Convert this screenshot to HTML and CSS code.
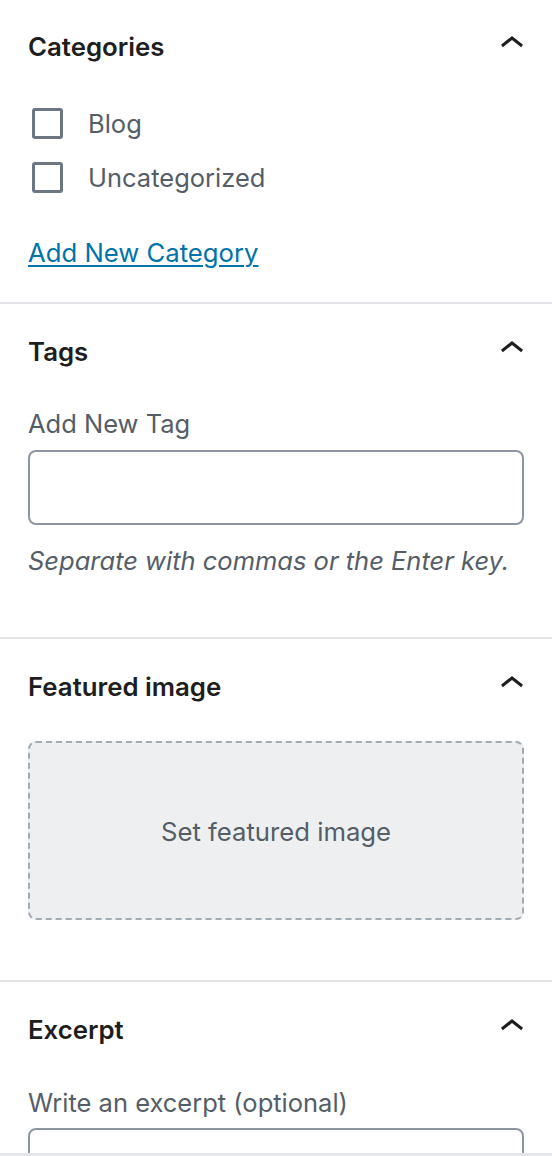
FILE: index.html
```html
<!DOCTYPE html>
<html lang="en">
<head>
    <meta charset="UTF-8">
    <meta name="viewport" content="width=device-width, initial-scale=1.0">
    <title>Post settings</title>
    <link rel="stylesheet" href="styles.css">
</head>
<body>
<div class="sidebar">
    <div class="panel first">
        <div class="panel-head">
            <h2>Categories</h2>
            <svg class="chevron" viewBox="0 0 24 24" width="48" height="48"><path d="M6.5 12.4L12 8l5.5 4.4-.9 1.2L12 10l-4.6 3.6-.9-1.2z"/></svg>
        </div>
        <div class="panel-body cats">
            <div class="checklist">
                <label class="check"><span class="box"></span>Blog</label>
                <label class="check"><span class="box"></span>Uncategorized</label>
            </div>
            <a href="#" class="add-link">Add New Category</a>
        </div>
    </div>

    <div class="panel">
        <div class="panel-head">
            <h2>Tags</h2>
            <svg class="chevron" viewBox="0 0 24 24" width="48" height="48"><path d="M6.5 12.4L12 8l5.5 4.4-.9 1.2L12 10l-4.6 3.6-.9-1.2z"/></svg>
        </div>
        <div class="panel-body tags">
            <div class="field-label">Add New Tag</div>
            <div class="text-input"></div>
            <p class="help">Separate with commas or the Enter key.</p>
        </div>
    </div>

    <div class="panel">
        <div class="panel-head">
            <h2>Featured image</h2>
            <svg class="chevron" viewBox="0 0 24 24" width="48" height="48"><path d="M6.5 12.4L12 8l5.5 4.4-.9 1.2L12 10l-4.6 3.6-.9-1.2z"/></svg>
        </div>
        <div class="panel-body featured">
            <div class="dropzone">Set featured image</div>
        </div>
    </div>

    <div class="panel">
        <div class="panel-head">
            <h2>Excerpt</h2>
            <svg class="chevron" viewBox="0 0 24 24" width="48" height="48"><path d="M6.5 12.4L12 8l5.5 4.4-.9 1.2L12 10l-4.6 3.6-.9-1.2z"/></svg>
        </div>
        <div class="panel-body excerpt">
            <div class="field-label">Write an excerpt (optional)</div>
            <div class="text-area"></div>
        </div>
    </div>
</div>
</body>
</html>
```

FILE: styles.css
```css
body {
    margin: 0;
    padding: 0;
    background-color: #fff;
    font-family: Inter, "Noto Sans", sans-serif;
    color: #1e1e1e;
}

.sidebar {
    height: 1153px;
    overflow: hidden;
    border-bottom: 3px solid #e4e6e9;
}

.panel {
    border-top: 2px solid #e2e4e7;
}

.panel.first {
    margin-top: -3px;
}

.panel-head {
    display: flex;
    align-items: center;
    justify-content: space-between;
    height: 94px;
    padding: 0 16px 0 28px;
}

.panel-head h2 {
    margin: 0;
    font-size: 25.8px;
    font-weight: 600;
    color: #1e1e1e;
}

.chevron {
    fill: #1e1e1e;
    margin-top: -4px;
}

.panel-body {
    padding: 0 28px;
}

/* categories */
.cats {
    padding-top: 15px;
    padding-bottom: 31px;
}

.checklist {
    display: flex;
    flex-direction: column;
    gap: 23px;
}

.check {
    display: flex;
    align-items: center;
    height: 31px;
    padding-left: 4px;
    font-size: 25.5px;
    color: #555d66;
}

.box {
    width: 31px;
    height: 31px;
    box-sizing: border-box;
    border: 3px solid #6c7781;
    border-radius: 3px;
    margin-right: 25px;
}

.add-link {
    display: block;
    margin-top: 42px;
    font-size: 25.7px;
    line-height: 36px;
    color: #0073aa;
    text-decoration: underline;
    text-decoration-thickness: 2px;
    text-underline-offset: 3px;
}

/* tags */
.field-label {
    font-size: 25.5px;
    line-height: 32px;
    color: #555d66;
}

.tags {
    padding-top: 10px;
    padding-bottom: 60px;
}

.text-input {
    margin-top: 10px;
    height: 75px;
    box-sizing: border-box;
    border: 2px solid #8d96a0;
    border-radius: 8px;
}

.help {
    margin: 20px 0 0;
    font-size: 25.5px;
    line-height: 32px;
    font-style: italic;
    color: #555d66;
    white-space: nowrap;
}

/* featured image */
.featured {
    padding-top: 8px;
    padding-bottom: 60px;
}

.dropzone {
    display: flex;
    align-items: center;
    justify-content: center;
    height: 179px;
    box-sizing: border-box;
    padding-top: 2px;
    background-color: #edeff0;
    border: 2px dashed #a2aab2;
    border-radius: 8px;
    font-size: 25.7px;
    color: #555d66;
}

/* excerpt */
.excerpt {
    padding-top: 11px;
}

.text-area {
    margin-top: 9px;
    height: 160px;
    border: 2px solid #8d96a0;
    border-radius: 8px;
}
```
